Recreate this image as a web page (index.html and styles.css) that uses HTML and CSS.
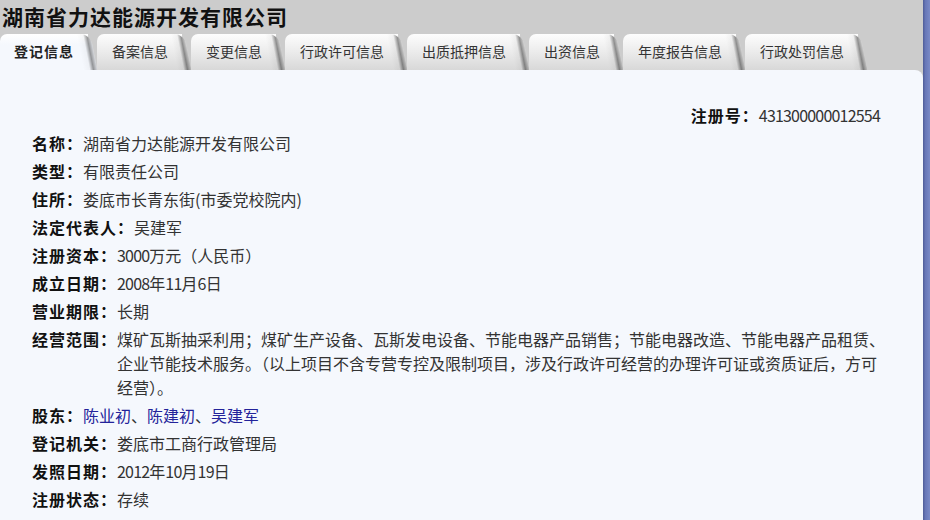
FILE: index.html
```html
<!DOCTYPE html>
<html lang="zh-CN">
<head>
<meta charset="utf-8">
<title>湖南省力达能源开发有限公司</title>
<link rel="stylesheet" href="styles.css">
</head>
<body>
<div class="page">
  <div class="main">
    <h1 class="title">湖南省力达能源开发有限公司</h1>
    <div class="tabs">
      <div class="tab active">登记信息</div>
      <div class="tab">备案信息</div>
      <div class="tab">变更信息</div>
      <div class="tab">行政许可信息</div>
      <div class="tab">出质抵押信息</div>
      <div class="tab">出资信息</div>
      <div class="tab">年度报告信息</div>
      <div class="tab">行政处罚信息</div>
    </div>
    <div class="panel">
      <div class="regno"><span class="label">注册号：</span><span class="num">431300000012554</span></div>
      <div class="row"><span class="label">名称：</span><span class="value">湖南省力达能源开发有限公司</span></div>
      <div class="row"><span class="label">类型：</span><span class="value">有限责任公司</span></div>
      <div class="row"><span class="label">住所：</span><span class="value">娄底市长青东街(市委党校院内)</span></div>
      <div class="row"><span class="label">法定代表人：</span><span class="value">吴建军</span></div>
      <div class="row"><span class="label">注册资本：</span><span class="value"><span class="num">3000</span>万元（人民币）</span></div>
      <div class="row"><span class="label">成立日期：</span><span class="value"><span class="num">2008</span>年<span class="num">11</span>月<span class="num">6</span>日</span></div>
      <div class="row"><span class="label">营业期限：</span><span class="value">长期</span></div>
      <div class="row"><span class="label">经营范围：</span><span class="value">煤矿瓦斯抽采利用；煤矿生产设备、瓦斯发电设备、节能电器产品销售；节能电器改造、节能电器产品租赁、企业节能技术服务。（以上项目不含专营专控及限制项目，涉及行政许可经营的办理许可证或资质证后，方可经营）。</span></div>
      <div class="row"><span class="label">股东：</span><span class="value"><a class="link" href="#">陈业初</a>、<a class="link" href="#">陈建初</a>、<a class="link" href="#">吴建军</a></span></div>
      <div class="row"><span class="label">登记机关：</span><span class="value">娄底市工商行政管理局</span></div>
      <div class="row"><span class="label">发照日期：</span><span class="value"><span class="num">2012</span>年<span class="num">10</span>月<span class="num">19</span>日</span></div>
      <div class="row"><span class="label">注册状态：</span><span class="value">存续</span></div>
    </div>
  </div>
  <div class="side"></div>
</div>
</body>
</html>
```
FILE: styles.css
```css
* { box-sizing: border-box; }
html, body { margin: 0; padding: 0; }
body {
  background: #f5f8fd;
  font-family: "Noto Sans CJK SC", "Noto Sans", sans-serif;
}
.page {
  display: flex;
  width: 930px;
  height: 520px;
  overflow: hidden;
}
.main {
  width: 923px;
  background: #cccccc;
  display: flex;
  flex-direction: column;
}
.side {
  width: 7px;
  background: linear-gradient(to right, #4f5d98 0%, #6878b8 35%, #7a8ac6 100%);
}
.title {
  margin: 0;
  height: 34px;
  line-height: 32px;
  padding-left: 2px;
  font-size: 21px;
  letter-spacing: 1px;
  font-weight: 700;
  color: #111;
}
.tabs {
  display: flex;
  height: 36px;
}
.tab {
  position: relative;
  z-index: 0;
  display: flex;
  align-items: center;
  padding: 0 23px 3px 15px;
  font-size: 14px;
  color: #333;
  white-space: nowrap;
}
.tab::before {
  content: "";
  position: absolute;
  top: 0;
  bottom: 0;
  left: 0;
  right: 9px;
  background: linear-gradient(#fdfdfd 0%, #efefef 40%, #d8d8d8 100%);
  border-top-left-radius: 7px;
  z-index: -1;
}
.tab::after {
  content: "";
  position: absolute;
  top: 0;
  bottom: 0;
  right: 3px;
  width: 14px;
  background:
    linear-gradient(to right, rgba(0,0,0,0) 0%, rgba(0,0,0,0.04) 45%, rgba(0,0,0,0.42) 72%, rgba(0,0,0,0.12) 100%),
    linear-gradient(#fdfdfd 0%, #efefef 40%, #d8d8d8 100%);
  transform: skewX(11deg);
  border-top-right-radius: 10px;
  z-index: -1;
}
.tab.active {
  font-weight: 700;
  letter-spacing: 1px;
  color: #222;
  padding-left: 14px;
  padding-right: 23px;
}
.tab.active::before {
  background: linear-gradient(#ffffff 0%, #f5f8fd 30%, #f5f8fd 100%);
}
.tab.active::after {
  background:
    linear-gradient(to right, rgba(0,0,0,0) 0%, rgba(0,0,0,0.03) 45%, rgba(0,0,0,0.40) 72%, rgba(0,0,0,0.12) 100%),
    linear-gradient(#ffffff 0%, #f5f8fd 30%, #f5f8fd 100%);
}
.panel {
  flex: 1;
  background: #f5f8fd;
  border-top-right-radius: 8px;
  padding: 33px 35px 0 32px;
  font-size: 16px;
  line-height: 24px;
  color: #333;
}
.regno {
  text-align: right;
  margin-bottom: 4px;
  padding-right: 8px;
}
.row {
  display: flex;
  margin-bottom: 4px;
}
.label {
  flex: none;
  font-weight: 700;
  letter-spacing: 1px;
  color: #111;
  white-space: nowrap;
}
.value {
  flex: 1;
}
.num {
  letter-spacing: -0.8px;
}
.link {
  color: #23239a;
  text-decoration: none;
}
```
